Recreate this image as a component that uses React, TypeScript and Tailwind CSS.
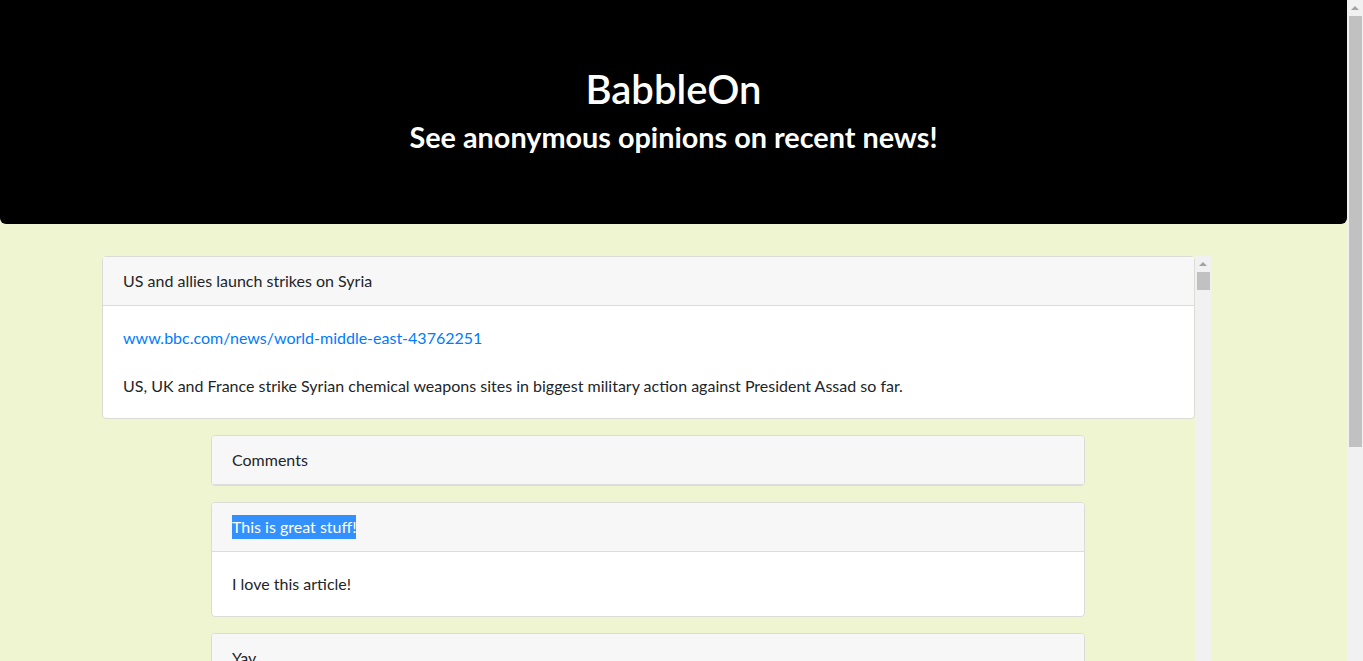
import React from "react";

const FONT = "font-['Lato','Noto_Sans',sans-serif]";

function CardHeader({ children }: { children: React.ReactNode }) {
  return (
    <div className="h-[49px] px-5 flex items-center bg-[#f7f7f7] border-b border-[#dcdcdc] text-[16px] text-[#212529]">
      {children}
    </div>
  );
}

function Card({ header, children, highlight }: { header: string; children?: React.ReactNode; highlight?: boolean }) {
  return (
    <div className="rounded-[4px] border border-[#dcdcd6] bg-white overflow-hidden shrink-0">
      <CardHeader>{highlight ? <span className="bg-[#3390ff] text-white">{header}</span> : header}</CardHeader>
      {children}
    </div>
  );
}

function ScrollArrow() {
  return (
    <div className="h-4 w-full flex items-center justify-center">
      <div className="w-0 h-0 border-l-[4px] border-r-[4px] border-b-[4px] border-l-transparent border-r-transparent border-b-[#a3a3a3]" />
    </div>
  );
}

export default function App() {
  return (
    <div className={`h-[661px] w-full flex overflow-hidden bg-[#f0f5d1] ${FONT}`}>
      <div className="flex-1 flex flex-col min-w-0">
        <header className="h-[224px] shrink-0 bg-black rounded-b-[6px] flex flex-col items-center text-white pt-[65px]">
          <h1 className="text-[40px] leading-[48px] font-semibold">BabbleOn</h1>
          <h3 className="mt-[7px] text-[28.8px] leading-[34px] font-bold">See anonymous opinions on recent news!</h3>
        </header>
        <div className="mt-8 ml-[102px] w-[1109px] flex flex-1 min-h-0">
          <div className="flex-1 min-w-0 flex flex-col gap-4 overflow-hidden">
            <div className="rounded-[4px] border border-[#dcdcd6] bg-white shrink-0">
              <CardHeader>US and allies launch strikes on Syria</CardHeader>
              <div className="p-5 text-[16px] leading-6 text-[#212529]">
                <p className="text-[#007bff]">www.bbc.com/news/world-middle-east-43762251</p>
                <p className="mt-6">
                  US, UK and France strike Syrian chemical weapons sites in biggest military action against President Assad so far.
                </p>
              </div>
            </div>
            <div className="w-[874px] ml-[109px] flex flex-col gap-4">
              <Card header="Comments" />
              <Card header="This is great stuff!" highlight>
                <div className="p-5 text-[16px] leading-6 text-[#212529]">I love this article!</div>
              </Card>
              <Card header="Yay">
                <div className="p-5 text-[16px] leading-6 text-[#212529]">Hooray</div>
              </Card>
            </div>
          </div>
          <div className="w-4 shrink-0 bg-[#f1f1f1] flex flex-col items-center">
            <ScrollArrow />
            <div className="w-[13px] h-[18px] bg-[#c1c1c1]" />
          </div>
        </div>
      </div>
      <div className="w-4 shrink-0 bg-[#f1f1f1] flex flex-col items-center">
        <ScrollArrow />
        <div className="w-[13px] h-[431px] bg-[#c1c1c1]" />
      </div>
    </div>
  );
}
